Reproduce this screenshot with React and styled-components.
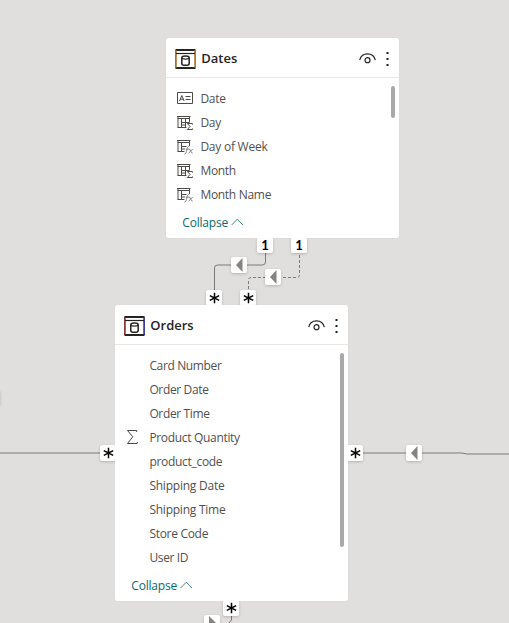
import React from "react";
import styled, { createGlobalStyle } from "styled-components";

const GlobalStyle = createGlobalStyle`
  *, *::before, *::after { box-sizing: border-box; }
  body { margin: 0; background: #e0dfdd; overflow: hidden; }
`;

const Canvas = styled.main`
  position: relative;
  width: 509px;
  height: 623px;
  overflow: hidden;
  background: #e0dfdd;
  font-family: "Open Sans", "Noto Sans", sans-serif;
  color: #252423;
`;

const Links = styled.svg`
  position: absolute;
  inset: 0;
  fill: none;
  stroke: #7c7a78;
  stroke-width: 1;
`;

const TableCard = styled.section`
  position: absolute;
  left: ${(p) => p.$x}px;
  top: ${(p) => p.$y}px;
  width: 233px;
  height: ${(p) => p.$h}px;
  display: flex;
  flex-direction: column;
  background: #fff;
  border-radius: 2px;
  box-shadow: 0 0 1px rgba(0, 0, 0, 0.15);
`;

const CardHeader = styled.header`
  display: flex;
  align-items: center;
  height: 40px;
  flex: none;
  padding: 2px 8px 0 9px;
  border-bottom: 1px solid #e8e7e6;
  svg { flex: none; }
`;

const CardTitle = styled.h2`
  flex: 1;
  margin: -2px 0 0 5.3px;
  font-size: 13px;
  line-height: 18px;
  font-weight: 600;
`;

const HeaderActions = styled.div`
  display: flex;
  align-items: center;
  gap: 9px;
`;

const CardBody = styled.div`
  flex: 1;
  display: flex;
  justify-content: space-between;
  min-height: 0;
  padding: 8px 4px 0 11px;
`;

const FieldList = styled.ul`
  list-style: none;
  margin: 0;
  padding: 0;
`;

const Field = styled.li`
  display: flex;
  align-items: center;
  height: 24px;
  font-size: 12px;
  color: #51504e;
  white-space: nowrap;
`;

const FieldIcon = styled.span`
  display: flex;
  width: 23.4px;
  flex: none;
`;

const FieldName = styled.span`
  letter-spacing: ${(p) => p.$spacing}px;
`;

const ScrollThumb = styled.div`
  width: 4px;
  height: ${(p) => p.$h}px;
  border-radius: 2px;
  background: #a9a9a9;
`;

const CollapseButton = styled.button`
  display: flex;
  align-items: center;
  gap: 3px;
  height: 20px;
  flex: none;
  margin: 0 0 6px 16.3px;
  padding: 0;
  border: 0;
  background: none;
  font: 12px "Open Sans", "Noto Sans", sans-serif;
  letter-spacing: -0.2px;
  color: #0b6a6b;
`;

const Badge = styled.div`
  position: absolute;
  left: ${(p) => p.$x}px;
  top: ${(p) => p.$y}px;
  width: 16px;
  height: 16px;
  display: flex;
  align-items: center;
  justify-content: center;
  background: #fff;
  border-radius: 2px;
  font-family: Lato, sans-serif;
  font-size: 13px;
  font-weight: 700;
  color: #000;
  box-shadow: 0 1px 3px rgba(0, 0, 0, 0.2);
`;

const TableIcon = ({ left, right }) => (
  <svg width="21" height="20" viewBox="0 0 21 20" fill="none" stroke="#252423">
    <path d="M.5 1H20.5M.5 19H20.5" strokeWidth="1.8" />
    <path d="M.9 1V19" stroke={left} strokeWidth="1.6" />
    <path d="M20.1 1V19" stroke={right} strokeWidth="1.6" />
    <path d="M1 4.5H20" strokeWidth="1.2" />
    <path d="M6.8 8.6V14.4C6.8 17 14.2 17 14.2 14.4V8.6" strokeWidth="1.5" />
    <ellipse cx="10.5" cy="8.6" rx="3.7" ry="1.6" strokeWidth="1.3" />
  </svg>
);

const EyeIcon = () => (
  <svg width="17" height="12" viewBox="0 0 17 12" fill="none" stroke="#252423">
    <path d="M.7 7.2C2.6-1.2 14.4-1.2 16.3 7.2" strokeWidth="1.2" />
    <circle cx="8.5" cy="7.2" r="2.5" strokeWidth="1.2" />
  </svg>
);

const MoreIcon = () => (
  <svg width="6" height="16" viewBox="0 0 6 16" fill="#1b1a2a">
    <rect x="1.5" y="1" width="2" height="2" />
    <rect x="1.5" y="7" width="2" height="2" />
    <rect x="1.5" y="13" width="2" height="2" />
  </svg>
);

const CardIcon = () => (
  <svg width="16" height="12" viewBox="0 0 16 12" fill="none" stroke="#4c4a48">
    <path d="M.5.5H15.5V11.5H.5Z" />
    <path d="M2.5 9L4.8 3.5L7.1 9M3.3 7.2H6.3M8.5 4.5H13.5M8.5 7.5H13.5" />
  </svg>
);

const CalculatedIcon = ({ kind }) => (
  <svg width="17" height="18" viewBox="0 0 17 18" fill="none" stroke="#4c4a48">
    <path d="M0 3.5H13.5M.5 5.5H13M1 3V14.5M12.5 3V9" />
    {kind === "sum" ? (
      <>
        <path d="M4.5 5.5V14.5M8.5 5.5V14.5M4.5 9.5H12.5M.5 14.5H9.5M4.5 12H9" />
        <path d="M15.5 11.5V10.5H10.3L13 13.5L10.3 16.5H15.5V15.5" />
      </>
    ) : (
      <>
        <path d="M4.5 5.5V14.5M4.5 9.5H9.5M.5 14.5H7.5M4.5 12H8" />
        <path
          d="M7.5 17.2C10 17.5 9.6 8.5 12.3 9.3M8.7 12.2H12M12 12C14 12 13.2 16.3 15.7 16.2M15.8 11.9L11.5 16.4"
          stroke="#777573"
          strokeWidth=".9"
        />
      </>
    )}
  </svg>
);

const SigmaIcon = () => (
  <svg width="13" height="16" viewBox="0 0 13 16" fill="none" stroke="#4c4a48">
    <path d="M10.7 3V1.5H1.5L6.8 7.8L1.5 14.5H11.2V13" />
  </svg>
);

const ChevronUp = () => (
  <svg width="13" height="8" viewBox="0 0 13 8" fill="none" stroke="#4b8288">
    <path d="M.6 7L6.3 1.2L12 7" />
  </svg>
);

const Asterisk = () => (
  <svg width="12" height="12" viewBox="0 0 12 12" stroke="#000" strokeWidth="1.5">
    <path d="M6.5 .8V11.2M1.8 3.6L11.2 8.4M11.2 3.6L1.8 8.4" />
  </svg>
);

const FilterArrow = () => (
  <svg width="16" height="16" viewBox="0 0 16 16" fill="#858381">
    <path d="M5 8L11.5 1V15Z" />
  </svg>
);

const CursorArrow = () => (
  <svg width="16" height="16" viewBox="0 0 16 16" fill="#858381">
    <path d="M5 1V14L14 10Z" />
  </svg>
);

const fieldIcons = {
  card: <CardIcon />,
  sum: <CalculatedIcon kind="sum" />,
  fx: <CalculatedIcon kind="fx" />,
  sigma: <SigmaIcon />,
};

const tables = [
  {
    name: "Dates", x: 166, y: 38, h: 200, thumb: 32,
    left: "#9a6418", right: "#a86a1a",
    fields: [
      ["Date", "card", -0.3], ["Day", "sum", -0.3], ["Day of Week", "fx", -0.24],
      ["Month", "sum", -0.3], ["Month Name", "fx", -0.3],
    ],
  },
  {
    name: "Orders", x: 115, y: 305, h: 296, thumb: 194,
    left: "#7a2626", right: "#2a2c86",
    fields: [
      ["Card Number", null, -0.36], ["Order Date", null, -0.36], ["Order Time", null, -0.36],
      ["Product Quantity", "sigma", -0.32], ["product_code", null, -0.3],
      ["Shipping Date", null, -0.23], ["Shipping Time", null, -0.24],
      ["Store Code", null, -0.3], ["User ID", null, -0.35],
    ],
  },
];

const badges = [
  { x: 257, y: 237, mark: "1" },
  { x: 291, y: 237, mark: "1" },
  { x: 231, y: 257, mark: "arrow" },
  { x: 265, y: 269, mark: "arrow" },
  { x: 206, y: 290, mark: "*" },
  { x: 240, y: 290, mark: "*" },
  { x: 100, y: 445, mark: "*" },
  { x: 347, y: 445, mark: "*" },
  { x: 406, y: 445, mark: "arrow" },
  { x: 223, y: 600, mark: "*" },
  { x: 204, y: 615, mark: "cursor" },
  { x: -16, y: 390, mark: "" },
];

const marks = { "*": <Asterisk />, arrow: <FilterArrow />, cursor: <CursorArrow />, 1: "1" };

export default function App() {
  return (
    <>
      <GlobalStyle />
      <Canvas>
        <Links width="509" height="623" viewBox="0 0 509 623">
          <path d="M265.5 250V262Q265.5 265 262.5 265H217.5Q214.5 265 214.5 268V292" />
          <path d="M299.5 250V275Q299.5 277.5 297 277.5H251Q248.5 277.5 248.5 280V292" strokeDasharray="3 2" />
          <path d="M0 453H104M360 453H462L467 454H509M231.5 614V620L229 623" />
        </Links>
        {badges.map((b) => (
          <Badge key={`${b.x}-${b.y}`} $x={b.x} $y={b.y}>{marks[b.mark]}</Badge>
        ))}
        {tables.map((t) => (
          <TableCard key={t.name} $x={t.x} $y={t.y} $h={t.h}>
            <CardHeader>
              <TableIcon left={t.left} right={t.right} />
              <CardTitle>{t.name}</CardTitle>
              <HeaderActions>
                <EyeIcon />
                <MoreIcon />
              </HeaderActions>
            </CardHeader>
            <CardBody>
              <FieldList>
                {t.fields.map(([name, icon, spacing]) => (
                  <Field key={name}>
                    <FieldIcon>{fieldIcons[icon]}</FieldIcon>
                    <FieldName $spacing={spacing}>{name}</FieldName>
                  </Field>
                ))}
              </FieldList>
              <ScrollThumb $h={t.thumb} />
            </CardBody>
            <CollapseButton>
              Collapse
              <ChevronUp />
            </CollapseButton>
          </TableCard>
        ))}
      </Canvas>
    </>
  );
}
